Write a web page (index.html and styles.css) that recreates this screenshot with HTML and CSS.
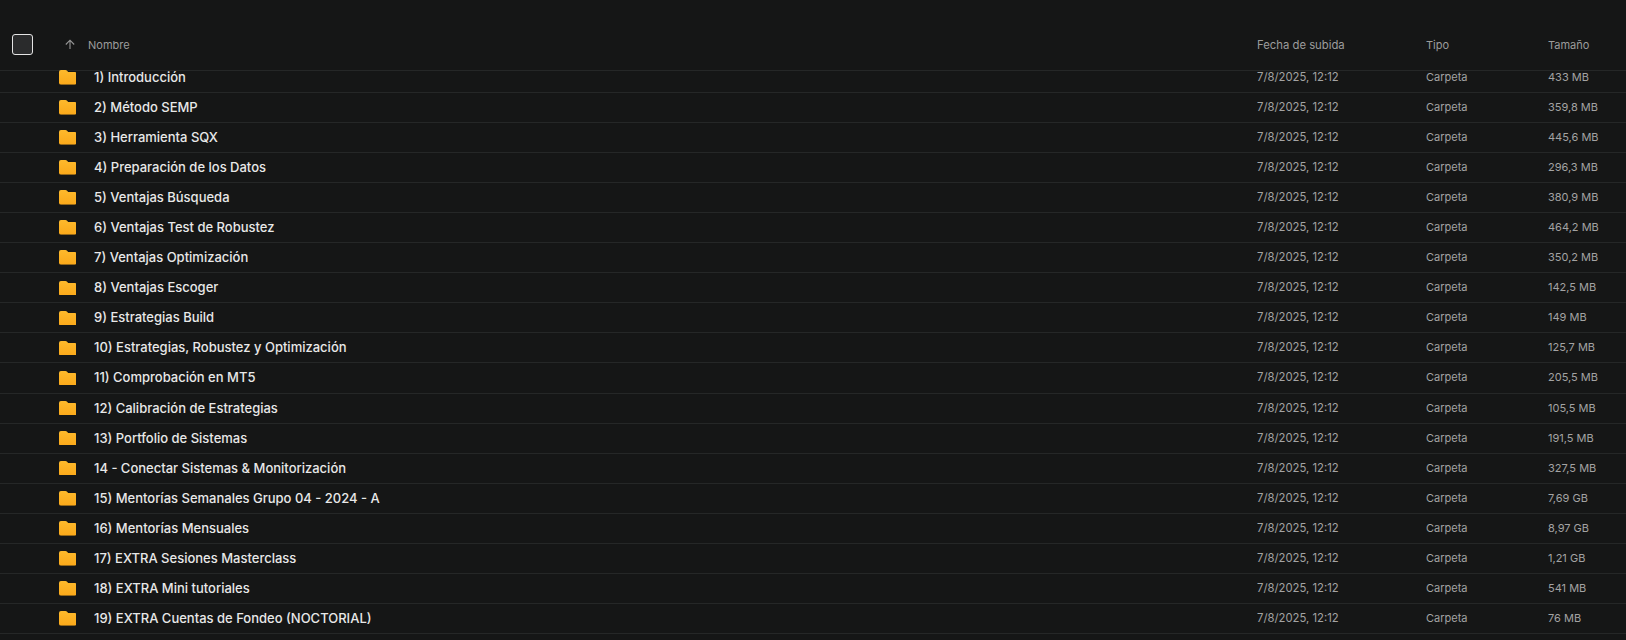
FILE: index.html
```html
<!DOCTYPE html>
<html lang="es">
<head>
    <meta charset="UTF-8">
    <title>Archivos</title>
    <link rel="stylesheet" href="styles.css">
</head>
<body>
    <svg class="defs" width="0" height="0">
        <defs>
            <linearGradient id="folderFill" x1="0" y1="0" x2="0" y2="1">
                <stop offset="0" stop-color="#fdb92c"/>
                <stop offset="1" stop-color="#fba91a"/>
            </linearGradient>
            <symbol id="folder" viewBox="0 0 18 15">
                <path d="M2 0h4.6c.6 0 1 .2 1.4.6L9.4 2H16a2 2 0 0 1 2 2v9a2 2 0 0 1-2 2H2a2 2 0 0 1-2-2V2a2 2 0 0 1 2-2z" fill="url(#folderFill)"/>
            </symbol>
        </defs>
    </svg>

    <div class="table">
        <div class="row head">
            <div class="check-cell"><span class="checkbox"></span></div>
            <div class="icon-cell">
                <svg class="sort" width="12" height="12" viewBox="0 0 12 12"><path d="M6 11V2.5M1.8 6.5 6 2.2l4.2 4.3" fill="none" stroke="currentColor" stroke-width="1.1"/></svg>
            </div>
            <div class="name">Nombre</div>
            <div class="date">Fecha de subida</div>
            <div class="type">Tipo</div>
            <div class="size">Tamaño</div>
        </div>
        <div class="rows">
            <div class="list" id="list"></div>
        </div>
    </div>

    <script>
        const folders = [
            ['1) Introducción', '433 MB'],
            ['2) Método SEMP', '359,8 MB'],
            ['3) Herramienta SQX', '445,6 MB'],
            ['4) Preparación de los Datos', '296,3 MB'],
            ['5) Ventajas Búsqueda', '380,9 MB'],
            ['6) Ventajas Test de Robustez', '464,2 MB'],
            ['7) Ventajas Optimización', '350,2 MB'],
            ['8) Ventajas Escoger', '142,5 MB'],
            ['9) Estrategias Build', '149 MB'],
            ['10) Estrategias, Robustez y Optimización', '125,7 MB'],
            ['11) Comprobación en MT5', '205,5 MB'],
            ['12) Calibración de Estrategias', '105,5 MB'],
            ['13) Portfolio de Sistemas', '191,5 MB'],
            ['14 - Conectar Sistemas & Monitorización', '327,5 MB'],
            ['15) Mentorías Semanales Grupo 04 - 2024 - A', '7,69 GB'],
            ['16) Mentorías Mensuales', '8,97 GB'],
            ['17) EXTRA Sesiones Masterclass', '1,21 GB'],
            ['18) EXTRA Mini tutoriales', '541 MB'],
            ['19) EXTRA Cuentas de Fondeo (NOCTORIAL)', '76 MB']
        ];

        const list = document.getElementById('list');
        folders.forEach(([name, size]) => {
            const row = document.createElement('div');
            row.className = 'row';
            row.innerHTML = `
                <div class="check-cell"></div>
                <div class="icon-cell"><svg class="folder" width="18" height="15"><use href="#folder"/></svg></div>
                <div class="name"></div>
                <div class="date">7/8/2025, 12:12</div>
                <div class="type">Carpeta</div>
                <div class="size">${size}</div>`;
            row.querySelector('.name').textContent = name;
            list.appendChild(row);
        });
    </script>
</body>
</html>
```

FILE: styles.css
```css
* {
    box-sizing: border-box;
    margin: 0;
    padding: 0;
}

html, body {
    height: 100%;
    overflow: hidden;
}

body {
    font-family: 'Inter', 'Liberation Sans', sans-serif;
    background: #151616;
    color: #a3a3a3;
    font-size: 11px;
}

.defs {
    display: block;
    height: 0;
}

.table {
    display: flex;
    flex-direction: column;
    height: 100%;
}

.row {
    display: grid;
    grid-template-columns: 58px 31px 1168px 169px 122px 1fr;
    align-items: center;
    height: 30.06px;
    border-bottom: 1px solid #252727;
}

.head {
    height: 71px;
    flex-shrink: 0;
    padding-top: 19px;
    font-size: 11px;
    color: #9c9c9c;
}

.rows {
    flex: 1;
}

.list {
    margin-top: -8px;
}

.list .name, .list .date, .list .type, .list .size {
    margin-bottom: 1px;
}

.check-cell {
    padding-left: 12px;
}

.checkbox {
    display: block;
    width: 21px;
    height: 21px;
    margin-bottom: 1px;
    background: #2a2b2c;
    border: 1px solid #e4e4e4;
    border-radius: 3px;
}

.icon-cell {
    display: flex;
    align-items: center;
}

.sort {
    margin: 0 0 2px 6px;
    color: #969696;
}

.folder {
    display: block;
    width: 17.6px;
    height: 14.7px;
    margin-left: .7px;
}

.name {
    font-size: 13px;
    font-weight: 500;
    color: #e8e8e8;
    padding-left: 5px;
}

.head .name {
    font-size: 11px;
    font-weight: 400;
    color: #9c9c9c;
    padding-left: 0;
    margin-left: -1px;
}

.date, .type, .size {
    white-space: nowrap;
}

.date {
    font-size: 11.3px;
}
```
